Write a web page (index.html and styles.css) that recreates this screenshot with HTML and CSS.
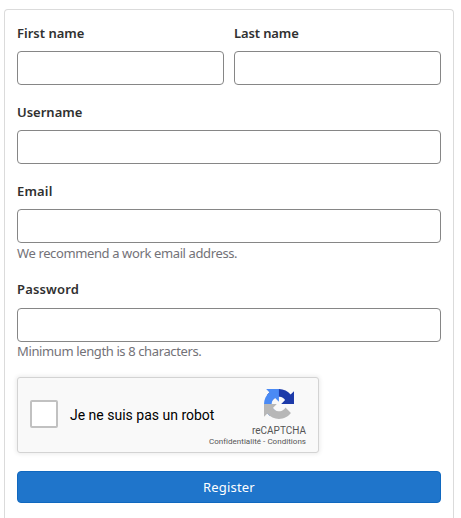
FILE: index.html
```html
<!DOCTYPE html>
<html lang="en">
<head>
<meta charset="utf-8">
<title>Register</title>
<link rel="stylesheet" href="styles.css">
</head>
<body>
<form class="card">
  <div class="row">
    <div class="group"><label for="first">First name</label><input id="first" type="text"></div>
    <div class="group"><label class="tight" for="last">Last name</label><input id="last" type="text"></div>
  </div>
  <div class="group"><label for="user">Username</label><input id="user" type="text"></div>
  <div class="group hinted"><label class="loose" for="email">Email</label><input id="email" type="email"><p class="hint">We recommend a work email address.</p></div>
  <div class="group hinted last"><label class="loose" for="pass">Password</label><input id="pass" type="password"><p class="hint">Minimum length is 8 characters.</p></div>
  <div class="captcha">
    <span class="check"></span>
    <span class="robot">Je ne suis pas un robot</span>
    <div class="brand">
      <svg class="logo" viewBox="0 0 64 64">
        <path fill="#1c3aa9" d="M64 31.955l-.033-1.37V4.687l-7.16 7.16C50.948 4.674 42.033.093 32.05.093c-10.4 0-19.622 4.96-25.458 12.64l11.736 11.86a15.55 15.55 0 0 1 4.754-5.334c2.05-1.6 4.952-2.906 8.968-2.906.485 0 .86.057 1.135.163 4.976.393 9.288 3.14 11.828 7.124l-8.307 8.307L64 31.953"/>
        <path fill="#4a8af4" d="M31.862.094l-1.37.033H4.594l7.16 7.16C4.58 13.147 0 22.06 0 32.046c0 10.4 4.96 19.622 12.64 25.458L24.5 45.768a15.55 15.55 0 0 1-5.334-4.754c-1.6-2.05-2.906-4.952-2.906-8.968 0-.485.057-.86.163-1.135.393-4.976 3.14-9.288 7.124-11.828l8.307 8.307L31.86.095"/>
        <path fill="#b7b7b7" d="M.001 32.045l.033 1.37v25.898l7.16-7.16c5.86 7.173 14.774 11.754 24.76 11.754 10.4 0 19.622-4.96 25.458-12.64l-11.736-11.86a15.55 15.55 0 0 1-4.754 5.334c-2.05 1.6-4.952 2.906-8.968 2.906-.485 0-.86-.057-1.135-.163-4.976-.393-9.288-3.14-11.828-7.124l8.307-8.307c-10.522.04-22.4.066-27.295-.005"/>
      </svg>
      <span class="name">reCAPTCHA</span>
      <span class="terms">Confidentialité - Conditions</span>
    </div>
  </div>
  <button class="register" type="button">Register</button>
</form>
</body>
</html>
```
FILE: styles.css
```css
* { box-sizing: border-box; }
body {
  height: 518px;
  margin: 0;
  padding: 9px 7px 0 4px;
  background: #fff;
  color: #303030;
  font-family: "Noto Sans", sans-serif;
  font-size: 13px;
}
.card {
  height: 509px;
  padding: 14px 12px 0;
  border: 1px solid #dbdbdb;
  border-bottom: 0;
  border-radius: 4px 4px 0 0;
}
.row { display: flex; gap: 10px; }
.row .group { flex: 1; }
.group { height: 79px; }
.hinted { height: 98px; }
.hinted.last { height: 87px; }
label {
  display: block;
  height: 27px;
  line-height: 18px;
  font-weight: 600;
  white-space: nowrap;
}
.tight { letter-spacing: -.12px; }
.loose { letter-spacing: .17px; }
.last label { height: 28px; }
input {
  display: block;
  width: 100%;
  height: 34px;
  margin: 0;
  border: 1px solid #868686;
  border-radius: 4px;
  background: #fff;
}
.hint {
  margin: 1px 0 0;
  line-height: 18px;
  color: #737278;
  letter-spacing: -.38px;
  white-space: nowrap;
}
.last .hint { margin-top: 0; }
.captcha {
  display: flex;
  width: 302px;
  height: 76px;
  margin-top: 10px;
  border: 1px solid #d3d3d3;
  border-radius: 3px;
  background: #f9f9f9;
  box-shadow: 0 0 4px 1px rgba(0, 0, 0, .08);
  font-family: Roboto, sans-serif;
}
.check {
  flex: none;
  width: 28px;
  height: 28px;
  margin: 22px 12px 0;
  border: 2px solid #c1c1c1;
  border-radius: 2px;
  background: #fff;
}
.robot {
  flex: none;
  line-height: 74px;
  font-size: 14px;
  color: #000;
  white-space: nowrap;
}
.brand {
  display: flex;
  flex: 1;
  flex-direction: column;
  align-items: flex-end;
  min-width: 0;
  padding: 11px 12px 0 0;
  color: #555;
  white-space: nowrap;
}
.logo { width: 30px; height: 30px; margin-right: 12px; }
.name { margin-top: 5px; font-size: 10px; line-height: 13px; }
.terms { font-size: 8px; line-height: 10px; letter-spacing: .03px; }
.register {
  display: block;
  width: 100%;
  height: 32px;
  margin: 18px 0 0;
  padding: 0;
  border: 1px solid #1068bf;
  border-radius: 4px;
  background: #1f75cb;
  color: #fff;
  font: 13px/30px "Noto Sans", sans-serif;
  letter-spacing: .18px;
}
```
